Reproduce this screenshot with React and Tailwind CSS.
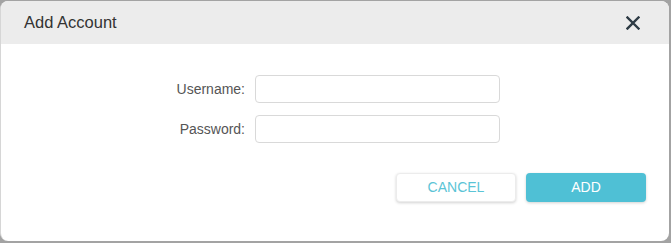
export default function App() {
  return (
    <div className="w-[671px] h-[243px] bg-[#a3a3a3] pt-px pr-[2px] pb-[2px] font-['Liberation_Sans',Arial,sans-serif]">
      <div className="h-full bg-white rounded-lg overflow-hidden border-l border-[#d6d6d6] flex flex-col">
        <div className="h-[43px] bg-[#ececec] flex items-center justify-between pl-[23px] pr-[29px] shrink-0">
          <h2 className="text-[16.5px] text-[#333]">Add Account</h2>
          <svg width="14" height="14" viewBox="0 0 14 14" className="text-[#2e3b45]">
            <path d="M1.5 1.5 L12.5 12.5 M12.5 1.5 L1.5 12.5" stroke="currentColor" strokeWidth="2.4" strokeLinecap="square" />
          </svg>
        </div>
        <div className="pt-[31px] flex flex-col gap-3">
          <div className="flex items-center">
            <label className="w-[254px] text-right pr-[10px] text-[14px] text-[#555]">Username:</label>
            <input type="text" className="w-[245px] h-[28px] border border-[#d9d9d9] rounded-[4px] outline-none px-2" />
          </div>
          <div className="flex items-center">
            <label className="w-[254px] text-right pr-[10px] text-[14px] text-[#555]">Password:</label>
            <input type="password" className="w-[245px] h-[28px] border border-[#d9d9d9] rounded-[4px] outline-none px-2" />
          </div>
        </div>
        <div className="flex justify-end gap-[10px] pr-[23px] pt-[30px]">
          <button className="w-[120px] h-[29px] rounded-[4px] bg-white border border-[#ececec] shadow-[0_1px_3px_rgba(0,0,0,0.18)] text-[14px] text-[#5bc4d6]">CANCEL</button>
          <button className="w-[120px] h-[29px] rounded-[4px] bg-[#4fc0d5] shadow-[0_1px_3px_rgba(0,0,0,0.18)] text-[14px] text-white">ADD</button>
        </div>
      </div>
    </div>
  )
}
